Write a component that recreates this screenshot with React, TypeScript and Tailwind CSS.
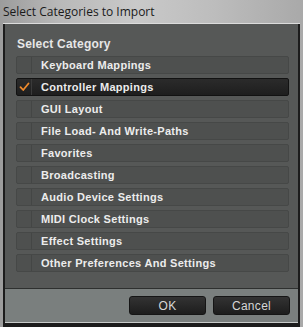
import { useState } from "react";

const CATEGORIES = [
  "Keyboard Mappings",
  "Controller Mappings",
  "GUI Layout",
  "File Load- And Write-Paths",
  "Favorites",
  "Broadcasting",
  "Audio Device Settings",
  "MIDI Clock Settings",
  "Effect Settings",
  "Other Preferences And Settings",
];

function Check() {
  return (
    <svg width="11" height="10" viewBox="0 0 11 10" fill="none">
      <path d="M1.5 5.2 L4.2 8 L9.5 1.5" stroke="#ee8a2c" strokeWidth="1.8" strokeLinecap="round" strokeLinejoin="round" />
    </svg>
  );
}

export default function App() {
  const [checked, setChecked] = useState<string[]>(["Controller Mappings"]);

  const toggle = (c: string) =>
    setChecked(prev => (prev.includes(c) ? prev.filter(x => x !== c) : [...prev, c]));

  return (
    <div
      className="w-[303px] h-[327px] flex flex-col overflow-hidden bg-[linear-gradient(90deg,#9c9c9c_0%,#b9b9b9_20%,#c9c9c9_45%,#bdbdbd_70%,#a9a9a9_100%)]"
      style={{ fontFamily: "'Liberation Sans', Arial, sans-serif" }}
    >
      {/* Window title */}
      <div
        className="h-[23px] pl-[3px] flex items-center text-[12px] text-[#1a1a1a] shrink-0"
        style={{ fontFamily: "'Open Sans', 'Noto Sans', sans-serif" }}
      >
        Select Categories to Import
      </div>

      {/* Frame */}
      <div className="flex-1 ml-[3px] mr-[3px] border-t border-[#dcdcdc] flex flex-col bg-[#1c1c1c] px-[2px] pb-[4px]">
        <div className="flex-1 flex flex-col">
          {/* Body */}
          <div className="flex-1 bg-[#565857] px-[11px] pt-[13px]">
            <div className="text-[12px] font-bold text-[#e6e6e6] pl-px leading-[14px] tracking-[0.2px]">Select Category</div>
            <div className="mt-[5px] flex flex-col gap-[4px]">
              {CATEGORIES.map(c => {
                const on = checked.includes(c);
                return (
                  <button
                    key={c}
                    onClick={() => toggle(c)}
                    className={
                      "h-[18px] w-[273px] rounded-[2px] flex items-stretch text-left border " +
                      (on
                        ? "bg-[linear-gradient(#2b2b2b,#1e1e1e)] border-[#121212]"
                        : "bg-[#4e504f] border-[#464847]")
                    }
                  >
                    <span
                      className={
                        "w-[15px] flex items-center justify-center border-r " +
                        (on ? "border-[#3a3a3a]" : "border-[#444645]")
                      }
                    >
                      {on && <Check />}
                    </span>
                    <span className="pl-[9px] flex items-center text-[11px] font-bold text-[#ececec] tracking-[0.3px]">
                      {c}
                    </span>
                  </button>
                );
              })}
            </div>
          </div>

          {/* Footer */}
          <div className="h-[35px] shrink-0 border-t border-[#2e302f] bg-[#7a7f7e] flex items-center justify-end gap-[7px] pr-[8px] border-b border-b-[#c8cbca]">
            <button className="w-[77px] h-[19px] rounded-[3px] border border-[#151515] bg-[linear-gradient(#333333,#1d1d1d)] text-[12px] text-[#d6d6d6] tracking-[0.3px]">
              OK
            </button>
            <button className="w-[77px] h-[19px] rounded-[3px] border border-[#151515] bg-[linear-gradient(#333333,#1d1d1d)] text-[12px] text-[#d6d6d6] tracking-[0.3px]">
              Cancel
            </button>
          </div>
        </div>
      </div>
    </div>
  );
}
